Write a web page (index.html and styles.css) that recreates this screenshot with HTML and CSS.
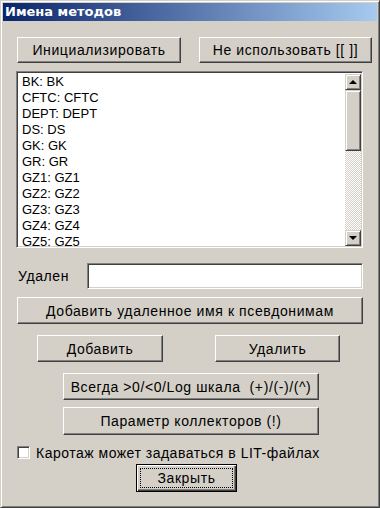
FILE: index.html
```html
<!DOCTYPE html>
<html lang="ru">
<head>
  <meta charset="UTF-8">
  <meta name="viewport" content="width=device-width, initial-scale=1.0">
  <title>Имена методов</title>
  <link rel="stylesheet" href="styles.css">
</head>
<body>

<div class="window">
  <!-- заголовок окна -->
  <div class="titlebar">Имена методов</div>

  <div class="content">
    <div class="row row-top">
      <button class="btn btn-init">Инициализировать</button>
      <button class="btn btn-skip">Не использовать [[ ]]</button>
    </div>

    <!-- список имён -->
    <div class="listbox">
      <ul class="items">
        <li>BK: BK</li>
        <li>CFTC: CFTC</li>
        <li>DEPT: DEPT</li>
        <li>DS: DS</li>
        <li>GK: GK</li>
        <li>GR: GR</li>
        <li>GZ1: GZ1</li>
        <li>GZ2: GZ2</li>
        <li>GZ3: GZ3</li>
        <li>GZ4: GZ4</li>
        <li>GZ5: GZ5</li>
      </ul>
      <div class="scrollbar">
        <div class="sb-btn"><span class="arrow-up"></span></div>
        <div class="sb-thumb"></div>
        <div class="sb-track"></div>
        <div class="sb-btn"><span class="arrow-down"></span></div>
      </div>
    </div>

    <div class="row row-removed">
      <label class="lbl" for="removed">Удален</label>
      <input class="field" id="removed" type="text">
    </div>

    <button class="btn btn-alias">Добавить удаленное имя к псевдонимам</button>

    <div class="row row-add">
      <button class="btn btn-add">Добавить</button>
      <button class="btn btn-del">Удалить</button>
    </div>

    <button class="btn btn-mid btn-always">Всегда &gt;0/&lt;0/Log шкала &nbsp;(+)/(-)/(^)</button>
    <button class="btn btn-mid btn-coll">Параметр коллекторов (!)</button>

    <label class="check">
      <span class="box"></span>
      <span>Каротаж может задаваться в LIT-файлах</span>
    </label>

    <button class="btn btn-default"><span class="focus">Закрыть</span></button>
  </div>
</div>

</body>
</html>
```

FILE: styles.css
```css
body {
  margin: 0;
  font-family: "Liberation Sans", Arial, sans-serif;
  background: #d4d0c8;
}
/* рамка окна в стиле Windows classic */
.window {
  width: 380px;
  height: 508px;
  box-sizing: border-box;
  background: #d4d0c8;
  border: 1px solid;
  border-color: #d4d0c8 #404040 #404040 #d4d0c8;
  box-shadow: inset 1px 1px #fff, inset -1px -1px #808080;
  padding: 2px;
}
.titlebar {
  height: 18px;
  background: linear-gradient(to right, #0a246a, #a6caf0);
  color: #fff;
  font-family: "DejaVu Sans", sans-serif;
  font-weight: bold;
  font-size: 13px;
  line-height: 18px;
  padding-left: 2px;
}
.content {
  display: flex;
  flex-direction: column;
  align-items: flex-start;
}
.row {
  display: flex;
  align-items: center;
}
/* кнопки */
.btn {
  font-family: "Liberation Sans", Arial, sans-serif;
  font-size: 14px;
  letter-spacing: 0.6px;
  color: #000;
  background: #d4d0c8;
  border: 1px solid;
  border-color: #fff #404040 #404040 #fff;
  box-shadow: inset -1px -1px #808080;
  padding: 0;
  box-sizing: border-box;
  height: 27px;
}
.row-top {
  margin-top: 16px;
  margin-left: 14px;
  gap: 18px;
}
.btn-init {
  width: 164px;
  height: 26px;
}
.btn-skip {
  width: 173px;
  height: 26px;
}
/* список */
.listbox {
  margin-top: 8px;
  margin-left: 13px;
  width: 347px;
  height: 177px;
  box-sizing: border-box;
  background: #fff;
  border: 1px solid;
  border-color: #808080 #fff #fff #808080;
  box-shadow: inset 1px 1px #404040, inset -1px -1px #d4d0c8;
  padding: 2px 1px 1px 2px;
  display: flex;
}
.items {
  list-style: none;
  margin: 0;
  padding: 0 0 0 3px;
  flex: 1;
  font-size: 13px;
  line-height: 16px;
  overflow: hidden;
}
.scrollbar {
  width: 16px;
  display: flex;
  flex-direction: column;
}
.sb-btn, .sb-thumb {
  background: #d4d0c8;
  border: 1px solid;
  border-color: #d4d0c8 #404040 #404040 #d4d0c8;
  box-shadow: inset 1px 1px #fff, inset -1px -1px #808080;
  box-sizing: border-box;
}
.sb-btn {
  height: 16px;
  display: flex;
  align-items: center;
  justify-content: center;
}
.sb-thumb {
  height: 61px;
}
.sb-track {
  flex: 1;
  background-color: #fff;
  background-image: conic-gradient(#d4d0c8 25%, #fff 0 50%, #d4d0c8 0 75%, #fff 0);
  background-size: 2px 2px;
}
.arrow-up {
  width: 0;
  height: 0;
  border-left: 4px solid transparent;
  border-right: 4px solid transparent;
  border-bottom: 4px solid #000;
}
.arrow-down {
  width: 0;
  height: 0;
  border-left: 4px solid transparent;
  border-right: 4px solid transparent;
  border-top: 4px solid #000;
}
/* поле ввода */
.row-removed {
  margin-top: 15px;
  margin-left: 15px;
}
.lbl {
  font-size: 14px;
  letter-spacing: 0.6px;
  width: 69px;
}
.field {
  width: 276px;
  height: 26px;
  box-sizing: border-box;
  margin: 0;
  background: #fff;
  border: 1px solid;
  border-color: #808080 #fff #fff #808080;
  box-shadow: inset 1px 1px #404040, inset -1px -1px #d4d0c8;
  outline: none;
}
.btn-alias {
  margin-top: 8px;
  margin-left: 14px;
  width: 346px;
}
.row-add {
  margin-top: 11px;
  margin-left: 34px;
  gap: 52px;
}
.btn-add {
  width: 126px;
}
.btn-del {
  width: 125px;
}
.btn-mid {
  margin-left: 60px;
  width: 256px;
}
.btn-always {
  margin-top: 11px;
}
.btn-coll {
  margin-top: 7px;
  height: 28px;
}
/* флажок */
.check {
  margin-top: 11px;
  margin-left: 14px;
  display: flex;
  align-items: center;
  gap: 6px;
  font-size: 14px;
  letter-spacing: 0.5px;
  height: 13px;
}
.box {
  width: 13px;
  height: 13px;
  box-sizing: border-box;
  background: #fff;
  border: 1px solid;
  border-color: #808080 #fff #fff #808080;
  box-shadow: inset 1px 1px #404040, inset -1px -1px #d4d0c8;
}
/* кнопка по умолчанию */
.btn-default {
  margin-top: 5px;
  margin-left: 133px;
  width: 101px;
  height: 28px;
  border: 1px solid #000;
  box-shadow: inset 1px 1px #fff, inset -1px -1px #404040, inset -2px -2px #808080;
  padding: 3px;
  display: flex;
}
.focus {
  flex: 1;
  border: 1px dotted #000;
  display: flex;
  align-items: center;
  justify-content: center;
}
```
